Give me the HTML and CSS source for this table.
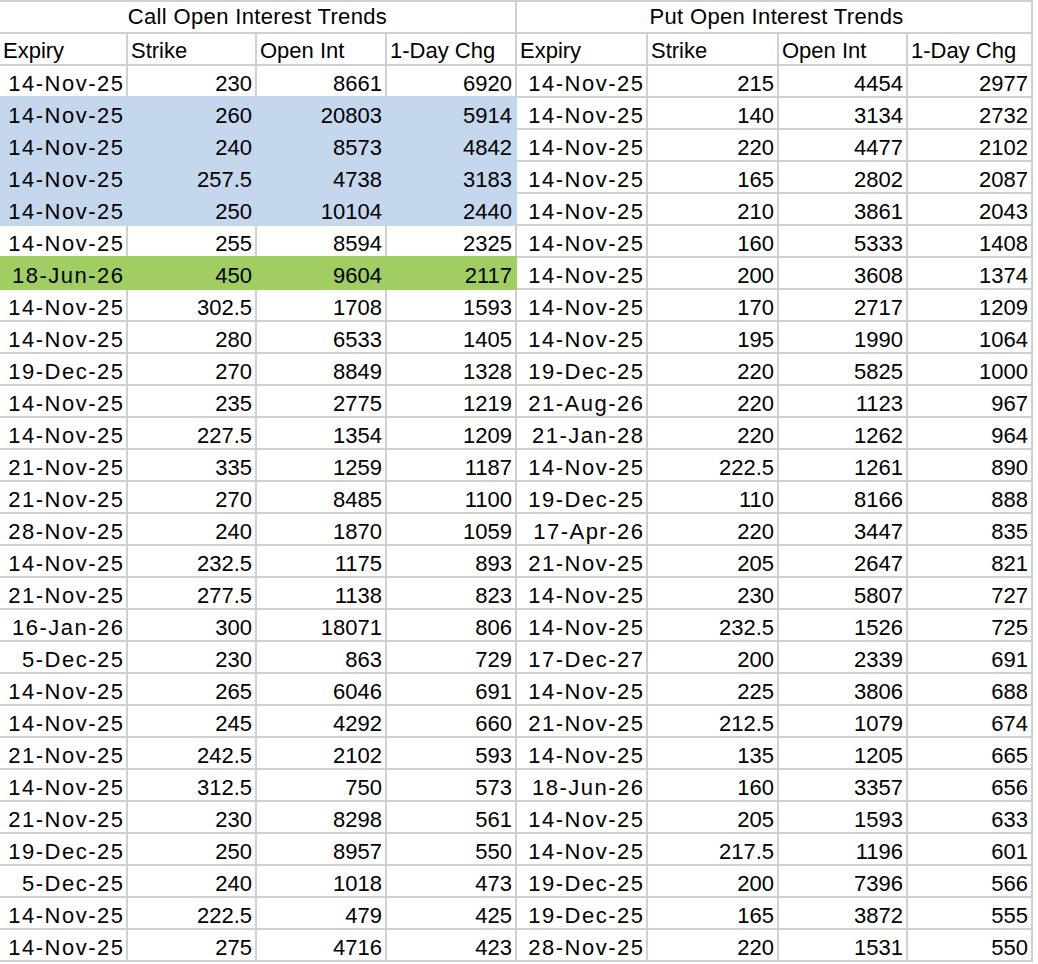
FILE: index.html
```html
<!DOCTYPE html>
<html lang="en">
<head>
<meta charset="utf-8">
<title>Open Interest Trends</title>
<link rel="stylesheet" href="styles.css">
</head>
<body>
<div class="sheet">
  <div class="c title">Call Open Interest Trends</div>
  <div class="c title put">Put Open Interest Trends</div>

  <div class="c hd">Expiry</div><div class="c hd">Strike</div><div class="c hd">Open Int</div><div class="c hd">1-Day Chg</div>
  <div class="c hd">Expiry</div><div class="c hd">Strike</div><div class="c hd">Open Int</div><div class="c hd">1-Day Chg</div>

  <div class="c r dt">14-Nov-25</div><div class="c r">230</div><div class="c r">8661</div><div class="c r">6920</div>
  <div class="c r dt">14-Nov-25</div><div class="c r">215</div><div class="c r">4454</div><div class="c r">2977</div>

  <div class="c r dt blue">14-Nov-25</div><div class="c r blue">260</div><div class="c r blue">20803</div><div class="c r blue">5914</div>
  <div class="c r dt">14-Nov-25</div><div class="c r">140</div><div class="c r">3134</div><div class="c r">2732</div>

  <div class="c r dt blue">14-Nov-25</div><div class="c r blue">240</div><div class="c r blue">8573</div><div class="c r blue">4842</div>
  <div class="c r dt">14-Nov-25</div><div class="c r">220</div><div class="c r">4477</div><div class="c r">2102</div>

  <div class="c r dt blue">14-Nov-25</div><div class="c r blue">257.5</div><div class="c r blue">4738</div><div class="c r blue">3183</div>
  <div class="c r dt">14-Nov-25</div><div class="c r">165</div><div class="c r">2802</div><div class="c r">2087</div>

  <div class="c r dt blue">14-Nov-25</div><div class="c r blue">250</div><div class="c r blue">10104</div><div class="c r blue">2440</div>
  <div class="c r dt">14-Nov-25</div><div class="c r">210</div><div class="c r">3861</div><div class="c r">2043</div>

  <div class="c r dt">14-Nov-25</div><div class="c r">255</div><div class="c r">8594</div><div class="c r">2325</div>
  <div class="c r dt">14-Nov-25</div><div class="c r">160</div><div class="c r">5333</div><div class="c r">1408</div>

  <div class="c r dt green">18-Jun-26</div><div class="c r green">450</div><div class="c r green">9604</div><div class="c r green">2117</div>
  <div class="c r dt">14-Nov-25</div><div class="c r">200</div><div class="c r">3608</div><div class="c r">1374</div>

  <div class="c r dt">14-Nov-25</div><div class="c r">302.5</div><div class="c r">1708</div><div class="c r">1593</div>
  <div class="c r dt">14-Nov-25</div><div class="c r">170</div><div class="c r">2717</div><div class="c r">1209</div>

  <div class="c r dt">14-Nov-25</div><div class="c r">280</div><div class="c r">6533</div><div class="c r">1405</div>
  <div class="c r dt">14-Nov-25</div><div class="c r">195</div><div class="c r">1990</div><div class="c r">1064</div>

  <div class="c r dt">19-Dec-25</div><div class="c r">270</div><div class="c r">8849</div><div class="c r">1328</div>
  <div class="c r dt">19-Dec-25</div><div class="c r">220</div><div class="c r">5825</div><div class="c r">1000</div>

  <div class="c r dt">14-Nov-25</div><div class="c r">235</div><div class="c r">2775</div><div class="c r">1219</div>
  <div class="c r dt">21-Aug-26</div><div class="c r">220</div><div class="c r">1123</div><div class="c r">967</div>

  <div class="c r dt">14-Nov-25</div><div class="c r">227.5</div><div class="c r">1354</div><div class="c r">1209</div>
  <div class="c r dt">21-Jan-28</div><div class="c r">220</div><div class="c r">1262</div><div class="c r">964</div>

  <div class="c r dt">21-Nov-25</div><div class="c r">335</div><div class="c r">1259</div><div class="c r">1187</div>
  <div class="c r dt">14-Nov-25</div><div class="c r">222.5</div><div class="c r">1261</div><div class="c r">890</div>

  <div class="c r dt">21-Nov-25</div><div class="c r">270</div><div class="c r">8485</div><div class="c r">1100</div>
  <div class="c r dt">19-Dec-25</div><div class="c r">110</div><div class="c r">8166</div><div class="c r">888</div>

  <div class="c r dt">28-Nov-25</div><div class="c r">240</div><div class="c r">1870</div><div class="c r">1059</div>
  <div class="c r dt">17-Apr-26</div><div class="c r">220</div><div class="c r">3447</div><div class="c r">835</div>

  <div class="c r dt">14-Nov-25</div><div class="c r">232.5</div><div class="c r">1175</div><div class="c r">893</div>
  <div class="c r dt">21-Nov-25</div><div class="c r">205</div><div class="c r">2647</div><div class="c r">821</div>

  <div class="c r dt">21-Nov-25</div><div class="c r">277.5</div><div class="c r">1138</div><div class="c r">823</div>
  <div class="c r dt">14-Nov-25</div><div class="c r">230</div><div class="c r">5807</div><div class="c r">727</div>

  <div class="c r dt">16-Jan-26</div><div class="c r">300</div><div class="c r">18071</div><div class="c r">806</div>
  <div class="c r dt">14-Nov-25</div><div class="c r">232.5</div><div class="c r">1526</div><div class="c r">725</div>

  <div class="c r dt">5-Dec-25</div><div class="c r">230</div><div class="c r">863</div><div class="c r">729</div>
  <div class="c r dt">17-Dec-27</div><div class="c r">200</div><div class="c r">2339</div><div class="c r">691</div>

  <div class="c r dt">14-Nov-25</div><div class="c r">265</div><div class="c r">6046</div><div class="c r">691</div>
  <div class="c r dt">14-Nov-25</div><div class="c r">225</div><div class="c r">3806</div><div class="c r">688</div>

  <div class="c r dt">14-Nov-25</div><div class="c r">245</div><div class="c r">4292</div><div class="c r">660</div>
  <div class="c r dt">21-Nov-25</div><div class="c r">212.5</div><div class="c r">1079</div><div class="c r">674</div>

  <div class="c r dt">21-Nov-25</div><div class="c r">242.5</div><div class="c r">2102</div><div class="c r">593</div>
  <div class="c r dt">14-Nov-25</div><div class="c r">135</div><div class="c r">1205</div><div class="c r">665</div>

  <div class="c r dt">14-Nov-25</div><div class="c r">312.5</div><div class="c r">750</div><div class="c r">573</div>
  <div class="c r dt">18-Jun-26</div><div class="c r">160</div><div class="c r">3357</div><div class="c r">656</div>

  <div class="c r dt">21-Nov-25</div><div class="c r">230</div><div class="c r">8298</div><div class="c r">561</div>
  <div class="c r dt">14-Nov-25</div><div class="c r">205</div><div class="c r">1593</div><div class="c r">633</div>

  <div class="c r dt">19-Dec-25</div><div class="c r">250</div><div class="c r">8957</div><div class="c r">550</div>
  <div class="c r dt">14-Nov-25</div><div class="c r">217.5</div><div class="c r">1196</div><div class="c r">601</div>

  <div class="c r dt">5-Dec-25</div><div class="c r">240</div><div class="c r">1018</div><div class="c r">473</div>
  <div class="c r dt">19-Dec-25</div><div class="c r">200</div><div class="c r">7396</div><div class="c r">566</div>

  <div class="c r dt">14-Nov-25</div><div class="c r">222.5</div><div class="c r">479</div><div class="c r">425</div>
  <div class="c r dt">19-Dec-25</div><div class="c r">165</div><div class="c r">3872</div><div class="c r">555</div>

  <div class="c r dt">14-Nov-25</div><div class="c r">275</div><div class="c r">4716</div><div class="c r">423</div>
  <div class="c r dt">28-Nov-25</div><div class="c r">220</div><div class="c r">1531</div><div class="c r">550</div>
</div>
</body>
</html>
```

FILE: styles.css
```css
html, body {
  margin: 0;
  padding: 0;
  background: #ffffff;
}

.sheet {
  display: grid;
  grid-template-columns: 126px 127px 128px 128px 129px 129px 127px 123px;
  grid-auto-rows: 30px;
  gap: 2px;
  padding: 2px 2px 2px 0;
  width: max-content;
  background: #d0d0d0;
  font-family: "Liberation Sans", Arial, sans-serif;
  font-size: 22px;
  color: #000;
}

.c {
  background: #ffffff;
  box-sizing: border-box;
  line-height: 24px;
  padding: 6px 3px 0 3px;
  white-space: nowrap;
  overflow: visible;
}

.title {
  grid-column: span 4;
  text-align: center;
  padding-top: 3px;
  letter-spacing: 0.35px;
}

.title.put {
  padding-left: 8px;
}

.hd {
  padding-top: 5px;
  padding-left: 3px;
}

.r {
  text-align: right;
}

.dt {
  letter-spacing: 1.5px;
  padding-right: 1.5px;
}

.blue {
  background: #c4d7ed;
  box-shadow: 0 0 0 2px #c4d7ed;
}

.green {
  background: #a0ce63;
  box-shadow: 0 0 0 2px #a0ce63;
}
```
